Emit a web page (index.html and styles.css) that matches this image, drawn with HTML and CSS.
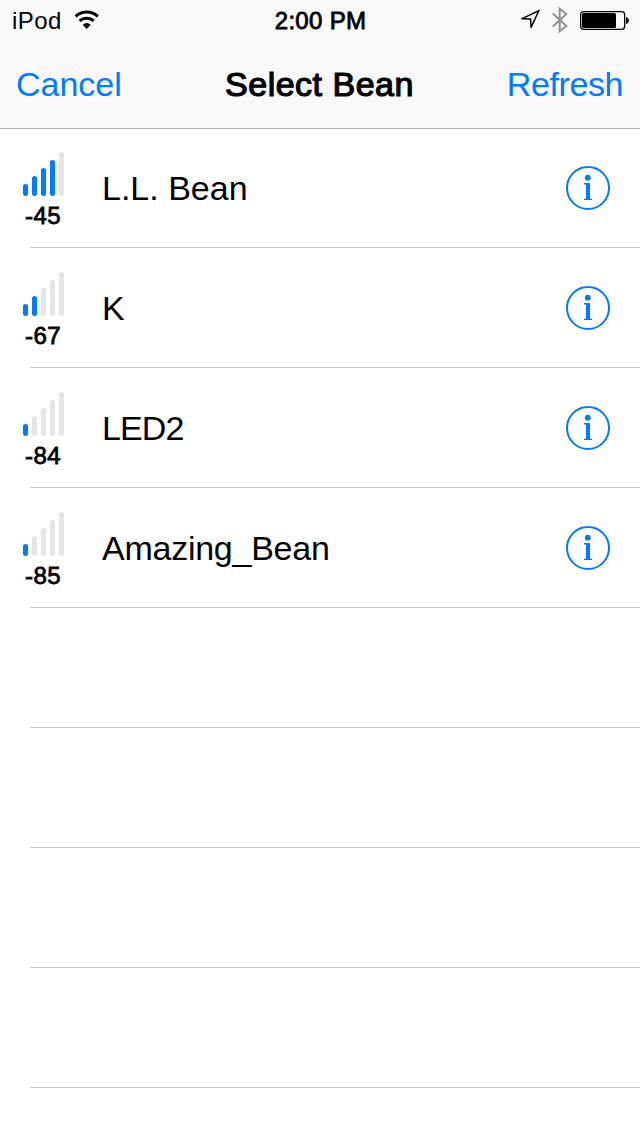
FILE: index.html
```html
<!DOCTYPE html>
<html lang="en">
<head>
<meta charset="utf-8">
<title>Select Bean</title>
<link rel="stylesheet" href="styles.css">
</head>
<body>
<svg class="defs" width="0" height="0">
  <symbol id="info" viewBox="0 0 44 44">
    <circle cx="22" cy="22" r="21" fill="none" stroke="currentColor" stroke-width="2"/>
    <circle cx="21.8" cy="11.700" r="2.900" fill="currentColor"/>
    <path d="M18 17.700H22M18 33.400H26" stroke="currentColor" stroke-width="1.400"/>
    <path d="M22 17V34" stroke="currentColor" stroke-width="4"/>
  </symbol>
</svg>
<div class="screen">
  <header class="header">
    <div class="status">
      <div class="status-left">
        <span class="carrier">iPod</span>
        <svg class="wifi" width="26" height="20" viewBox="0 0 26 20" fill="none" stroke="#000">
          <path d="M1.500 6.400A16.600 16.600 0 0 1 23.900 6.400" stroke-width="3"/>
          <path d="M5.600 10.800A10.800 10.800 0 0 1 19.800 10.800" stroke-width="3"/>
          <path d="M8.700 14.800Q12.700 11.200 16.700 14.800L12.700 18.900Z" fill="#000" stroke="none"/>
        </svg>
      </div>
      <span class="time">2:00 PM</span>
      <div class="status-right">
        <svg width="22" height="22" viewBox="0 0 22 22">
          <path d="M2.500 9.800L19.800 1.800L12 18.600L11.600 10Z" fill="none" stroke="#000" stroke-width="1.400"/>
        </svg>
        <svg class="bluetooth" width="18" height="28" viewBox="0 0 18 28">
          <path d="M1.800 7.500L15.300 20L8.700 25.200V2.800L15.300 8L1.800 20.500" fill="none" stroke="#929292" stroke-width="2"/>
        </svg>
        <svg class="battery" width="49" height="20" viewBox="0 0 49 20">
          <rect x=".65" y="1.650" width="44" height="17.700" rx="3" fill="none" stroke="#000" stroke-width="1.300"/>
          <rect x="2" y="3" width="34" height="15" rx="1.500"/>
          <path d="M46 7C49.800 7.500 49.800 13.500 46 14Z"/>
        </svg>
      </div>
    </div>
    <nav class="nav">
      <span class="action">Cancel</span>
      <span class="title">Select Bean</span>
      <span class="action refresh">Refresh</span>
    </nav>
  </header>
  <main class="list">
    <div class="row">
      <div class="signal">
        <div class="bars"><i class="on"></i><i class="on"></i><i class="on"></i><i class="on"></i><i></i></div>
        <span class="rssi">-45</span>
      </div>
      <span class="name">L.L. Bean</span>
      <svg class="info"><use href="#info"/></svg>
    </div>
    <div class="row">
      <div class="signal">
        <div class="bars"><i class="on"></i><i class="on"></i><i></i><i></i><i></i></div>
        <span class="rssi">-67</span>
      </div>
      <span class="name">K</span>
      <svg class="info"><use href="#info"/></svg>
    </div>
    <div class="row">
      <div class="signal">
        <div class="bars"><i class="on"></i><i></i><i></i><i></i><i></i></div>
        <span class="rssi">-84</span>
      </div>
      <span class="name tight">LED2</span>
      <svg class="info"><use href="#info"/></svg>
    </div>
    <div class="row">
      <div class="signal">
        <div class="bars"><i class="on"></i><i></i><i></i><i></i><i></i></div>
        <span class="rssi">-85</span>
      </div>
      <span class="name snug">Amazing_Bean</span>
      <svg class="info"><use href="#info"/></svg>
    </div>
    <div class="row"></div>
    <div class="row"></div>
    <div class="row"></div>
    <div class="row"></div>
  </main>
</div>
</body>
</html>
```
FILE: styles.css
```css
* { box-sizing: border-box; }
body {
  margin: 0;
  background: #fff;
  color: #000;
  font-family: "Liberation Sans", Arial, sans-serif;
}
.defs { position: absolute; }
.screen { width: 640px; height: 1136px; overflow: hidden; }
svg { display: block; flex: none; }

.header {
  height: 128px;
  background: #f8f8f8;
  box-shadow: 0 1px 0 #b2b2b2;
  position: relative;
}
.status, .nav {
  display: grid;
  grid-template-columns: 1fr auto 1fr;
  align-items: center;
}
.status { height: 40px; padding: 0 11px 0 12px; font-size: 24px; align-items: start; }
.status-left { display: flex; align-items: center; gap: 12px; height: 40px; }
.carrier { letter-spacing: .4px; line-height: 40px; padding-top: 2px; }
.time { line-height: 40px; padding-top: 1px; letter-spacing: .3px; -webkit-text-stroke: .8px #000; }
.status-right { display: flex; align-items: center; justify-content: flex-end; height: 40px; }
.bluetooth { margin-left: 10px; }
.battery { margin-left: 11px; }

.nav { height: 88px; padding: 0 17px 0 16px; font-size: 34px; line-height: 88px; }
.action { color: #007aff; }
.refresh { text-align: right; letter-spacing: -.4px; }
.title { -webkit-text-stroke: 1.2px #000; letter-spacing: .5px; }

.row {
  height: 120px;
  display: flex;
  align-items: center;
  padding: 0 30px 0 23px;
  background: linear-gradient(#c8c7cc, #c8c7cc) 30px 119px / 610px 1px no-repeat;
}
.signal { width: 79px; height: 120px; padding-top: 24px; }
.bars { display: flex; gap: 4px; align-items: flex-end; height: 44px; }
.bars i { width: 5px; height: 12px; border-radius: 2.5px; background: #e5e5e5; }
.bars i:nth-child(2) { height: 20px; }
.bars i:nth-child(3) { height: 28px; }
.bars i:nth-child(4) { height: 36px; }
.bars i:nth-child(5) { height: 44px; }
.bars .on { background: #007aff; }
.rssi {
  display: block;
  width: 40px;
  text-align: center;
  font-size: 24px;
  letter-spacing: .4px;
  line-height: 40px;
  -webkit-text-stroke: .8px #000;
}
.name { flex: 1; font-size: 34px; line-height: 40px; }
.tight { letter-spacing: -.9px; }
.snug { letter-spacing: -.25px; }
.info { width: 44px; height: 44px; color: #007aff; }
```
